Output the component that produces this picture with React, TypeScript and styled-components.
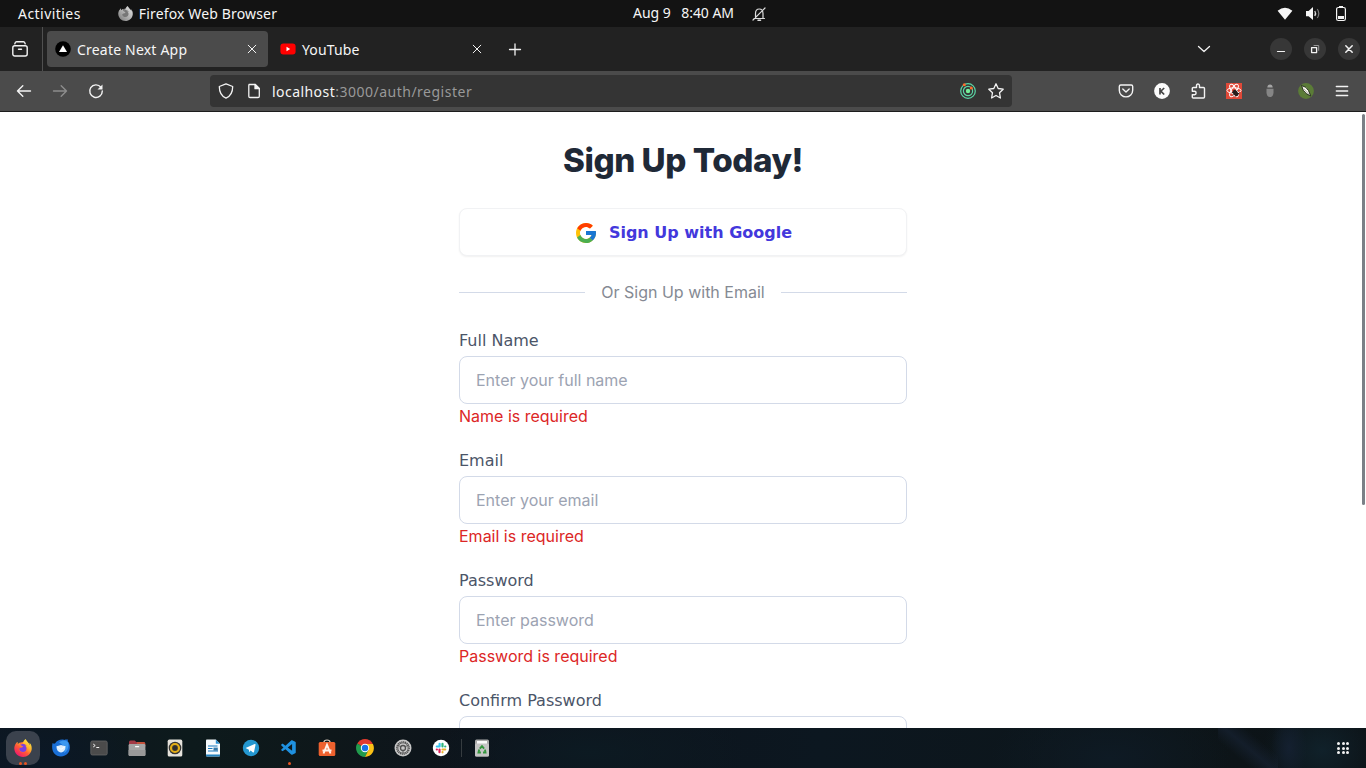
import React from "react";
import styled, { createGlobalStyle } from "styled-components";
import { FcGoogle } from "react-icons/fc";
import { SiFirefoxbrowser } from "react-icons/si";
import { VscVscode } from "react-icons/vsc";

const Global = createGlobalStyle`
  * { box-sizing: border-box; }
  html, body { margin: 0; padding: 0; }
  body { overflow: hidden; background: #fff; }
  svg { display: block; flex: none; }
`;

const Desktop = styled.div`
  width: 1366px;
  height: 768px;
  display: flex;
  flex-direction: column;
  overflow: hidden;
  font-family: "Noto Sans", "Open Sans", sans-serif;
  color: #f6f6f6;
`;

const Label = styled.span<{ $size?: number; $track?: number; $color?: string }>`
  font-size: ${(p) => p.$size ?? 14}px;
  letter-spacing: ${(p) => p.$track ?? 0}px;
  color: ${(p) => p.$color ?? "inherit"};
  line-height: 20px;
  white-space: pre;
`;

/* ---------- system bar ---------- */
const SystemBar = styled.header`
  height: 27px;
  flex: none;
  background: #131313;
  display: grid;
  grid-template-columns: 1fr auto 1fr;
  align-items: center;
`;
const SystemLeft = styled.div`
  display: flex;
  align-items: center;
  padding-left: 18px;
`;
const AppName = styled.div`
  display: flex;
  align-items: center;
  gap: 6px;
  margin-left: 37px;
`;
const Clock = styled.div`
  display: flex;
  align-items: center;
  gap: 17px;
  padding-left: 34px;
`;
const ClockLabel = styled(Label)`
  margin-top: -2px;
`;
const SystemRight = styled.div`
  display: flex;
  align-items: center;
  justify-content: flex-end;
  gap: 12px;
  padding-right: 17px;
`;

/* ---------- tab strip ---------- */
const TabStrip = styled.div`
  height: 44px;
  flex: none;
  background: #222;
  display: flex;
  align-items: center;
`;
const ViewButton = styled.div`
  width: 43px;
  height: 44px;
  border-right: 1px solid #505050;
  display: flex;
  align-items: center;
  padding-left: 12px;
`;
const Tab = styled.div<{ $active?: boolean }>`
  width: 221px;
  height: 36px;
  margin-left: 4px;
  border-radius: 4px;
  background: ${(p) => (p.$active ? "#4b4b4b" : "transparent")};
  display: flex;
  align-items: center;
  padding: 0 8px;
`;
const TabTitle = styled.div`
  flex: 1;
  padding: 1px 0 0 6px;
  display: flex;
`;
const NewTab = styled.div`
  margin-left: 14px;
`;
const WindowControls = styled.div`
  margin-left: auto;
  display: flex;
  align-items: center;
  gap: 12px;
  padding-right: 6px;
`;
const ListTabs = styled.div`
  margin-right: 46px;
`;
const RoundButton = styled.div`
  width: 22px;
  height: 22px;
  border-radius: 50%;
  background: #373737;
  display: flex;
  align-items: center;
  justify-content: center;
`;

/* ---------- navigation bar ---------- */
const NavBar = styled.div`
  height: 41px;
  flex: none;
  background: #4b4b4b;
  border-bottom: 1px solid #1c1c1c;
  display: flex;
  align-items: center;
`;
const NavButtons = styled.div`
  display: flex;
  gap: 20px;
  padding-left: 16px;
  width: 210px;
`;
const UrlBar = styled.div`
  width: 802px;
  height: 32px;
  border-radius: 4px;
  background: #343434;
  display: flex;
  align-items: center;
  gap: 12px;
  padding: 0 8px;
`;
const Address = styled.div`
  flex: 1;
  display: flex;
  margin-left: -2px;
  padding-top: 1px;
`;
const Extensions = styled.div`
  margin-left: auto;
  display: flex;
  gap: 20px;
  padding-right: 16px;
`;

/* ---------- page ---------- */
const Page = styled.main`
  flex: 1;
  min-height: 0;
  overflow: hidden;
  background: #fff;
  display: flex;
  justify-content: center;
  position: relative;
  font-family: Inter, sans-serif;
`;
const ScrollThumb = styled.div`
  position: absolute;
  top: 2px;
  right: 1px;
  width: 3px;
  height: 391px;
  border-radius: 2px;
  background: #7b8087;
`;
const Form = styled.form`
  width: 448px;
  padding-top: 28px;
  display: flex;
  flex-direction: column;
  font-size: 16px;
  line-height: 24px;
`;
const Heading = styled.h1`
  margin: 0 0 28px;
  font-size: 33.2px;
  line-height: 40px;
  height: 40px;
  font-weight: 800;
  letter-spacing: -0.45px;
  text-align: center;
  color: #1f2937;
  white-space: nowrap;
`;
const GoogleButton = styled.button`
  height: 48px;
  flex: none;
  border: 1px solid #f1f2f4;
  border-radius: 8px;
  background: #fff;
  box-shadow: 0 1px 2px rgba(0, 0, 0, 0.06);
  display: flex;
  align-items: center;
  justify-content: center;
  gap: 11px;
  padding: 1px 0 0;
  font: 700 16px/24px "DejaVu Sans", sans-serif;
  color: #4338dc;
`;
const Divider = styled.div`
  margin: 24px 0;
  display: flex;
  align-items: center;
  gap: 16px;
  color: #858a93;
  white-space: nowrap;
`;
const Rule = styled.span`
  flex: 1;
  height: 1px;
  background: #d3dae8;
`;
const Field = styled.div`
  display: flex;
  flex-direction: column;
  margin-bottom: 20px;
`;
const FieldLabel = styled.label`
  font-family: "DejaVu Sans", sans-serif;
  color: #4b5568;
  padding-top: 1px;
  margin-bottom: 3px;
`;
const Input = styled.input`
  height: 48px;
  border: 1px solid #d3dae8;
  border-radius: 8px;
  padding: 0 16px;
  font: 400 16px/24px Inter, sans-serif;
  color: #1f2937;
  background: #fff;
  &::placeholder { color: #9ca3b2; opacity: 1; }
`;
const ErrorText = styled.p`
  margin: 0;
  color: #dc2626;
`;

/* ---------- dock ---------- */
const DockBar = styled.footer`
  height: 40px;
  flex: none;
  display: flex;
  align-items: center;
  padding-left: 4px;
  background:
    linear-gradient(40deg, transparent 30%, rgba(24, 36, 54, 0.6) 50%, transparent 70%) 1218px 0 / 60px 40px no-repeat,
    radial-gradient(ellipse 18px 36px at 1289px 20px, #142030 0%, transparent 100%),
    radial-gradient(ellipse 60px 50px at 1322px 22px, #10212a 0%, transparent 100%),
    radial-gradient(ellipse 120px 60px at 1110px 30px, #0e1a24 0%, transparent 100%),
    radial-gradient(ellipse 100px 50px at 40px 30px, #0b1826 0%, transparent 100%),
    radial-gradient(ellipse 160px 50px at 590px 25px, #0c1a22 0%, transparent 100%),
    linear-gradient(90deg, #0d1620, #0d1a1c 14%, #0e171a 24%, #0d131c 38%, #0c1720 60%, #0d1519 86%, #0c1216);
`;
const DockItem = styled.div<{ $active?: boolean }>`
  position: relative;
  width: 34px;
  height: 34px;
  margin: 0 2px;
  border-radius: 10px;
  background: ${(p) => (p.$active ? "#3b424d" : "transparent")};
  display: flex;
  align-items: center;
  justify-content: center;
`;
const Dots = styled.div`
  position: absolute;
  left: 0;
  right: 0;
  bottom: 0;
  display: flex;
  gap: 2px;
  justify-content: center;
`;
const Dot = styled.i`
  width: 3px;
  height: 3px;
  border-radius: 50%;
  background: #e95420;
`;
const DockSeparator = styled.div`
  width: 1px;
  height: 18px;
  margin: 0 1px 0 1px;
  background: #363c40;
`;
const AppGrid = styled.div`
  margin-left: auto;
  margin-right: 17px;
  display: grid;
  grid-template-columns: repeat(3, 3px);
  gap: 1.5px;
`;
const GridDot = styled.i`
  height: 3px;
  border-radius: 50%;
  background: #f2f2f2;
`;

/* ---------- icons ---------- */
type IconProps = { children: React.ReactNode; size?: number; color?: string; box?: number; w?: number };
const Line = ({ children, size = 16, color = "#f3f3f3", box = 16, w = 1.3 }: IconProps) => (
  <svg width={size} height={size} viewBox={`0 0 ${box} ${box}`} fill="none" stroke={color} strokeWidth={w} strokeLinecap="round" strokeLinejoin="round">
    {children}
  </svg>
);
const Art = ({ children, size = 18, box = 18 }: IconProps) => (
  <svg width={size} height={size} viewBox={`0 0 ${box} ${box}`}>{children}</svg>
);
const CloseIcon = () => <Line w={1}><path d="M4.2 4.2l7.6 7.6M11.8 4.2l-7.6 7.6" /></Line>;

const FirefoxMono = () => (
  <svg width="15" height="15" viewBox="0 0 24 24">
    <defs>
      <linearGradient id="ffm" x1="1" y1="0" x2="0" y2="1">
        <stop offset="0" stopColor="#ededed" /><stop offset="1" stopColor="#777" />
      </linearGradient>
    </defs>
    <circle cx="12" cy="13" r="9" fill="#777" />
    <SiFirefoxbrowser size={24} fill="url(#ffm)" />
  </svg>
);
const FirefoxIcon = () => (
  <svg width="18" height="18" viewBox="0 0 24 24">
    <defs>
      <linearGradient id="ffc" x1="0.85" y1="0.05" x2="0.2" y2="0.95">
        <stop offset="0" stopColor="#fff14a" /><stop offset="0.35" stopColor="#ffb12c" />
        <stop offset="0.6" stopColor="#ff5a36" /><stop offset="1" stopColor="#ef1670" />
      </linearGradient>
    </defs>
    <circle cx="12" cy="13" r="9" fill="#ff7139" />
    <circle cx="12" cy="12" r="5.2" fill="#7a3fe0" />
    <SiFirefoxbrowser size={24} fill="url(#ffc)" />
  </svg>
);
const ThunderbirdIcon = () => (
  <Art>
    <path d="M.6 4C1.500 5 2.400 5 3.200 4.300 5.200 1.200 9 0 12.300.9c1.300-.6 2.800-.6 3.900-.2-.5.500-.6 1-.5 1.600 2.700 3 2.900 8 .4 11.700C12.800 18.400 5.700 18.700 2.300 14.600-.1 11.300-.3 7.300.6 4z" fill="#1a6fd6" />
    <path d="M7 3.500c3-2.700 7-2.500 9-.3 1.500 4-.5 9-4 11 1.500-4 .500-8-5-10.700z" fill="#3c98f0" />
    <path d="M4.600 7.300L9 6l4.300 1.300c.6 3-1.200 5.800-4.300 6.300-3-.5-4.800-3.200-4.400-6.300z" fill="#dceefd" />
    <path d="M4.800 7.600L9 10.300l4.300-2.700" stroke="#fff" strokeWidth=".8" fill="none" />
  </Art>
);
const TerminalIcon = () => (
  <Art>
    <rect x=".8" y="2" width="16.400" height="14" rx="1.500" fill="#4b4b4b" stroke="#656565" strokeWidth=".8" />
    <path d="M3.200 5l2 1.500-2 1.500M6.300 8.500h2.900" stroke="#f2f2f2" strokeWidth="1" fill="none" />
  </Art>
);
const FilesIcon = () => (
  <Art>
    <path d="M1 3.200Q1 1.500 2.500 1.500h4.200L8.200 3H15.800Q17.200 3 17.200 4.500V8H1z" fill="#a33a46" />
    <path d="M9 3h6.800Q17.200 3 17.200 4.500V6H9z" fill="#c3523b" />
    <rect x=".6" y="5" width="16.800" height="12" rx="1.300" fill="#a5a5a5" />
    <path d="M.6 11h16.800v4.700q0 1.300-1.300 1.300H1.900Q.6 17 .6 15.700z" fill="#999" />
    <rect x="7" y="7" width="4.200" height="1.300" rx=".6" fill="#fff" />
  </Art>
);
const RhythmboxIcon = () => (
  <Art>
    <rect x="1.700" y=".6" width="14.600" height="17" rx="1.600" fill="#e6e3dc" />
    <circle cx="9" cy="9" r="6.300" fill="#353535" />
    <circle cx="9" cy="9" r="4" fill="none" stroke="#e4ae17" strokeWidth="2.200" />
    <circle cx="9" cy="9" r="2" fill="#2d2d2d" />
  </Art>
);
const WriterIcon = () => (
  <Art>
    <path d="M2.700.6h9.100L16 4.800V16.400q0 1-1 1H3q-1 0-1-1V1.600q0-1 .7-1z" fill="#f5f9fc" />
    <path d="M11.800.6L16 4.800h-4.200z" fill="#2b8fd0" />
    <path d="M4 7h9.500M4 9.500h4.500M4 12h10" stroke="#1678be" strokeWidth="1.200" />
    <rect x="9.500" y="8.600" width="4.300" height="3" fill="#3478a8" />
    <path d="M2 15.500h14v.9q0 1-1 1H3q-1 0-1-1z" fill="#2381bd" />
  </Art>
);
const TelegramIcon = () => (
  <Art>
    <circle cx="9" cy="9" r="8.200" fill="#2497d0" />
    <path d="M3.600 9.100l9.100-4q1-.3.800.8l-1.500 7.200q-.2.800-1 .3L8.600 11.600l-1.300 1.600-.4-2.500z" fill="#fff" />
  </Art>
);
const SoftwareIcon = () => (
  <Art>
    <path d="M5.800 3.600Q6 1 9 1t3.200 2.600" fill="none" stroke="#d6c8bb" strokeWidth="1.200" />
    <rect x=".7" y="3" width="16.600" height="14" rx="1.500" fill="#ee612e" />
    <path d="M5.500 14.500L9 5.800l3.500 8.700M4.500 11.500h9" stroke="#fff2eb" strokeWidth="1.900" fill="none" />
  </Art>
);
const ChromeIcon = () => (
  <Art>
    <path d="M9 9L1.210 4.500A9 9 0 0 1 16.790 4.500z" fill="#e33b2e" />
    <path d="M9 9L1.210 4.500A9 9 0 0 0 9 18L12.500 11z" fill="#219b4d" />
    <path d="M9 5H16.950A9 9 0 0 1 9 18L12.460 11z" fill="#fbc116" />
    <circle cx="9" cy="9" r="4.200" fill="#fff" />
    <circle cx="9" cy="9" r="3.200" fill="#1a73e8" />
  </Art>
);
const SettingsIcon = () => (
  <Art>
    <circle cx="9" cy="9" r="8.500" fill="#c7c7c7" />
    <circle cx="9" cy="9" r="6.200" fill="none" stroke="#505050" strokeWidth="1.300" strokeDasharray="1.300 .6" />
    <circle cx="9" cy="9" r="5.200" fill="none" stroke="#555" strokeWidth=".9" />
    <circle cx="9" cy="9" r="2.500" fill="none" stroke="#505050" strokeWidth="1.300" />
    <path d="M9 11.500V14M6.800 7.800L4.600 6.500M11.200 7.800l2.200-1.300" stroke="#555" strokeWidth=".9" />
  </Art>
);
const SlackIcon = () => (
  <Art>
    <circle cx="9" cy="9" r="8.200" fill="#fff" />
    <g strokeWidth="2.200" strokeLinecap="round">
      <path d="M7.600 4.800v2.600M4.800 7.500h2.600" stroke="#36c5f0" />
      <path d="M10.500 4.800v2.700M13.200 7.500h.1" stroke="#2eb67d" />
      <path d="M10.500 10.500h2.700M10.500 13.200v.1" stroke="#ecb22e" />
      <path d="M7.500 10.500v2.700M4.800 10.500h.1" stroke="#e01e5a" />
    </g>
  </Art>
);
const TrashIcon = () => (
  <Art>
    <rect x="2" y=".6" width="14" height="17" rx="1.500" fill="#a9a9a9" />
    <rect x="2" y="4.500" width="14" height="13" rx="1.500" fill="#c4c4c4" />
    <rect x="4" y="2" width="10" height="2.600" fill="#fafafa" />
    <path d="M6.800 9.700L9 7.200l2.100 2.400M12 10.600l.5 2.900H10M7.900 13.500H5.500l.7-3" stroke="#33963d" strokeWidth="1.900" fill="none" />
  </Art>
);

const dockApps: { icon: React.ReactNode; dots?: number; active?: boolean }[] = [
  { icon: <FirefoxIcon />, dots: 2, active: true },
  { icon: <ThunderbirdIcon /> },
  { icon: <TerminalIcon /> },
  { icon: <FilesIcon /> },
  { icon: <RhythmboxIcon /> },
  { icon: <WriterIcon /> },
  { icon: <TelegramIcon /> },
  { icon: <VscVscode size={18} color="#1f91e0" />, dots: 1 },
  { icon: <SoftwareIcon /> },
  { icon: <ChromeIcon /> },
  { icon: <SettingsIcon /> },
  { icon: <SlackIcon /> },
];

const fields = [
  { label: "Full Name", placeholder: "Enter your full name", error: "Name is required" },
  { label: "Email", placeholder: "Enter your email", error: "Email is required" },
  { label: "Password", placeholder: "Enter password", error: "Password is required" },
  { label: "Confirm Password", placeholder: "", error: "" },
];

export default function App() {
  return (
    <Desktop>
      <Global />
      <SystemBar>
        <SystemLeft>
          <Label $track={0.45}>Activities</Label>
          <AppName>
            <FirefoxMono />
            <Label $track={0.15}>Firefox Web Browser</Label>
          </AppName>
        </SystemLeft>
        <Clock>
          <ClockLabel $track={-0.07}>Aug 9   8:40 AM</ClockLabel>
          <Line w={1.2} color="#ddd">
            <path d="M3 12.500h10.500M4.500 12V7.500C4.500 4.500 6 3 8.200 3s3.800 1.500 3.800 4.500V12M2 14L14 2" />
            <path d="M7 14.300h2.500" strokeWidth="1.500" />
          </Line>
        </Clock>
        <SystemRight>
          <svg width="16" height="16" viewBox="0 0 16 16"><path d="M.6 4.700Q8-1 15.400 4.700L8 13.800z" fill="#f5f5f5" /></svg>
          <svg width="16" height="16" viewBox="0 0 16 16" fill="none">
            <path d="M1 5h2.600L8 1v13L3.600 10.200H1z" fill="#f5f5f5" />
            <path d="M9.800 5q1.600 2.500 0 5" stroke="#ddd" strokeWidth="1.300" />
            <path d="M12.300 3q3 4.500 0 9" stroke="#777" strokeWidth="1.200" />
          </svg>
          <svg width="16" height="16" viewBox="0 0 16 16" fill="none">
            <rect x="3.600" y="1.500" width="8.800" height="13" rx="1.800" stroke="#f5f5f5" strokeWidth="1.200" />
            <path d="M6 .7h4" stroke="#f5f5f5" strokeWidth="1.400" />
            <rect x="5" y="10" width="6" height="3" fill="#f5f5f5" />
          </svg>
        </SystemRight>
      </SystemBar>

      <TabStrip>
        <ViewButton>
          <Line w={1.400}>
            <rect x=".8" y="4.800" width="14.400" height="10.200" rx="2" />
            <path d="M2.800 2.800Q3.200.8 4.500.8h7q1.300 0 1.700 2M6.500 8.200h3" />
          </Line>
        </ViewButton>
        <Tab $active>
          <svg width="16" height="16" viewBox="0 0 16 16"><circle cx="8" cy="8" r="7.800" fill="#000" /><path d="M8 4.200l4 6.800H4z" fill="#fff" /></svg>
          <TabTitle><Label $track={0.2}>Create Next App</Label></TabTitle>
          <CloseIcon />
        </Tab>
        <Tab>
          <svg width="16" height="16" viewBox="0 0 16 16"><rect x=".4" y="2.400" width="15.200" height="11.200" rx="3" fill="#f00" /><path d="M6.500 5.800L10.200 8l-3.700 2.200z" fill="#fff" /></svg>
          <TabTitle><Label $track={0.15}>YouTube</Label></TabTitle>
          <CloseIcon />
        </Tab>
        <NewTab><Line w={1.300}><path d="M8 3v11M2.500 8.500h11" /></Line></NewTab>
        <WindowControls>
          <ListTabs><Line w={1.300}><path d="M2.500 5.500L8 10.500l5.500-5" /></Line></ListTabs>
          <RoundButton><Line w={1.200}><path d="M4.500 10.500h7" /></Line></RoundButton>
          <RoundButton>
            <Line w={1.300}><rect x="4.600" y="6.600" width="5" height="5" /><path d="M7 4.500h4.700v4.800" stroke="#999" strokeWidth="1" /></Line>
          </RoundButton>
          <RoundButton><Line w={1.500}><path d="M4.800 4.800l6.400 6.400M11.200 4.800l-6.400 6.400" /></Line></RoundButton>
        </WindowControls>
      </TabStrip>

      <NavBar>
        <NavButtons>
          <Line w={1.400}><path d="M14.500 8h-13M6.800 2.800L1.500 8l5.300 5.200" /></Line>
          <Line w={1.400} color="#8d8d8d"><path d="M1.500 8h13M9.200 2.800L14.500 8l-5.300 5.200" /></Line>
          <Line w={1.400}><path d="M12.900 4.200A6.300 6.300 0 1 0 14.300 8" /><path d="M14.500 1.500v5H9.500z" fill="#f3f3f3" stroke="none" /></Line>
        </NavButtons>
        <UrlBar>
          <Line><path d="M8 .9l6.700 2.600c0 5-1.700 9.500-6.700 11.700C3 13 1.300 8.500 1.300 3.500z" /></Line>
          <Line w={1.300}><path d="M3 1.500h6.300L13.300 5.500v7.700q0 1.300-1.300 1.300H4q-1.200 0-1.200-1.200V2.500q0-1 .700-1z" /><path d="M9 1.500v4.200h4.300z" fill="#f3f3f3" /></Line>
          <Address>
            <Label $track={0.45}>localhost</Label>
            <Label $track={0.5} $color="#999">:3000/auth/register</Label>
          </Address>
          <Line w={1.200} color="#5bd6a5">
            <circle cx="8" cy="8" r="7.300" /><circle cx="8" cy="8" r="4.600" />
            <circle cx="8" cy="8" r="2.200" fill="#75f09b" stroke="none" />
            <circle cx="4.300" cy="1.800" r="1.500" fill="#ff6b2c" stroke="none" />
            <circle cx="11.300" cy="5" r="1.500" fill="#ff6b2c" stroke="none" />
          </Line>
          <Line w={1.300}><path d="M8 .8l2.200 4.700 5 .7-3.700 3.500.9 5.300L8 12.500 3.600 15l.9-5.300L.8 6.200l5-.7z" /></Line>
        </UrlBar>
        <Extensions>
          <Line w={1.400}><path d="M2.800 2h10.400q1.500 0 1.500 1.500V7.200A6.500 6.500 0 0 1 1.300 7.200V3.500Q1.300 2 2.800 2zM4.800 6L8 9l3.200-3" /></Line>
          <svg width="16" height="16" viewBox="0 0 16 16"><circle cx="8" cy="8" r="7.900" fill="#fbfbfb" /><path d="M6 5v6.500M10.200 5L6.800 8.200l3.400 3.300" stroke="#444" strokeWidth="1.700" fill="none" /></svg>
          <Line w={1.400}><path d="M6.500 4.500V2.800Q6.500 1 8 1t1.500 1.800v1.700h4q1 0 1 1V14q0 1-1 1H3.300q-1 0-1-1v-2.300H4.500q1.600 0 1.600-1.700T4.500 8.300H2.300V5.500q0-1 1-1z" /></Line>
          <svg width="16" height="16" viewBox="0 0 16 16" fill="none">
            <rect width="16" height="16" fill="#df4938" />
            <g stroke="#fff" strokeWidth="1"><ellipse cx="8" cy="7.500" rx="7" ry="2.700" /><ellipse cx="8" cy="7.500" rx="7" ry="2.700" transform="rotate(60 8 7.500)" /><ellipse cx="8" cy="7.500" rx="7" ry="2.700" transform="rotate(120 8 7.500)" /></g>
            <ellipse cx="9.500" cy="10" rx="2.200" ry="3.500" transform="rotate(-35 9.500 10)" fill="#271d1b" />
            <path d="M6 9.500l6.500 1.500M7 12.500l4.500-5M9.500 13.500l4-4" stroke="#271d1b" />
          </svg>
          <svg width="16" height="16" viewBox="0 0 16 16"><path d="M5.300 4.500Q5.500 1.600 8 1.600t2.700 2.900z" fill="#a5a5a5" /><path d="M4.500 5.700h7v3.500Q11.500 14 8 14T4.500 9.200z" fill="#858585" /></svg>
          <svg width="16" height="16" viewBox="0 0 16 16"><circle cx="8" cy="8" r="7.900" fill="#5b7c37" /><path d="M3.500 2.500Q8.500 3.500 10.500 7.500L12.800 13 8.500 10.800Q4.500 8 3.500 2.500z" fill="#f4f4e8" stroke="#222c18" strokeWidth="1" /><path d="M6 6l6 6.500" stroke="#777" strokeWidth=".5" /></svg>
          <Line w={1.300}><path d="M2.300 3.500h11.400M2.300 8h11.400M2.300 12.500h11.400" /></Line>
        </Extensions>
      </NavBar>

      <Page>
        <Form>
          <Heading>Sign Up Today!</Heading>
          <GoogleButton type="button"><FcGoogle size={24} />Sign Up with Google</GoogleButton>
          <Divider><Rule />Or Sign Up with Email<Rule /></Divider>
          {fields.map((f) => (
            <Field key={f.label}>
              <FieldLabel>{f.label}</FieldLabel>
              <Input placeholder={f.placeholder} />
              {f.error && <ErrorText>{f.error}</ErrorText>}
            </Field>
          ))}
        </Form>
        <ScrollThumb />
      </Page>

      <DockBar>
        {dockApps.map((app, i) => (
          <DockItem key={i} $active={app.active}>
            {app.icon}
            {app.dots && <Dots>{Array.from({ length: app.dots }, (_, d) => <Dot key={d} />)}</Dots>}
          </DockItem>
        ))}
        <DockSeparator />
        <DockItem><TrashIcon /></DockItem>
        <AppGrid>{Array.from({ length: 9 }, (_, d) => <GridDot key={d} />)}</AppGrid>
      </DockBar>
    </Desktop>
  );
}
